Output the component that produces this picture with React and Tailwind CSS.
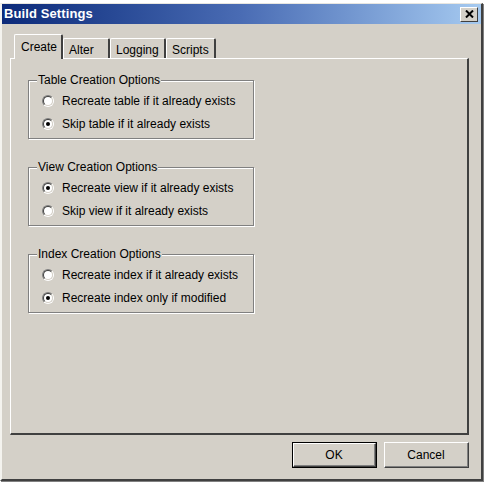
const TABS = [
  { label: 'Create', w: 'w-[49px]', active: true },
  { label: 'Alter', w: 'w-[47px]' },
  { label: 'Logging', w: 'w-[56px]' },
  { label: 'Scripts', w: 'w-[50px]' },
]

const GROUPS = [
  { title: 'Table Creation Options', options: ['Recreate table if it already exists', 'Skip table if it already exists'], picked: 1 },
  { title: 'View Creation Options', options: ['Recreate view if it already exists', 'Skip view if it already exists'], picked: 0 },
  { title: 'Index Creation Options', options: ['Recreate index if it already exists', 'Recreate index only if modified'], picked: 1 },
]

function Radio({ on }) {
  return (
    <div className="w-[12px] h-[12px] rounded-full border border-t-[#808080] border-l-[#808080] border-b-white border-r-white shrink-0">
      <div className="w-full h-full rounded-full border border-t-[#404040] border-l-[#404040] border-b-[#d4d0c8] border-r-[#d4d0c8] bg-white flex items-center justify-center">
        {on && <div className="w-[4px] h-[4px] rounded-full bg-black" />}
      </div>
    </div>
  )
}

function Group({ g }) {
  return (
    <fieldset className="w-[226px] border border-[#808080] shadow-[inset_1px_1px_0_#fff,1px_1px_0_#fff] pl-[13px] pt-[2px] pb-[3px]">
      <legend className="ml-[-5px] px-[1px] bg-[#d4d0c8] leading-[14px] relative">{g.title}</legend>
      {g.options.map((o, i) => (
        <div key={o} className="h-[23px] flex items-center gap-[8px]">
          <Radio on={i === g.picked} />
          <span>{o}</span>
        </div>
      ))}
    </fieldset>
  )
}

function Btn({ children, def }) {
  return (
    <div className={`w-[85px] h-[26px] bg-[#d4d0c8] flex items-center justify-center ${def ? 'border border-black' : ''}`}>
      <div className="w-full h-full border border-t-white border-l-white border-r-[#404040] border-b-[#404040] flex">
        <div className="flex-1 border-r border-b border-[#808080] flex items-center justify-center">{children}</div>
      </div>
    </div>
  )
}

export default function App() {
  return (
    <div className="w-[485px] h-[484px] bg-white pt-[3px] text-[12px] text-black" style={{ fontFamily: '"Liberation Sans", Arial, sans-serif' }}>
      <div className="w-[483px] h-[478px] bg-[#d4d0c8] border-t border-t-[#e8e6e0] border-l-[2px] border-l-[#f4f3ef] border-r-[2px] border-r-[#404040] border-b-[2px] border-b-[#404040] shadow-[1px_1px_0_#808080] flex flex-col">
        <div className="h-[20px] bg-gradient-to-r from-[#0c2a7a] via-[#4a6cb4] to-[#a6caf0] flex items-center justify-between pl-[2px] pr-[3px]">
          <span className="text-white font-bold text-[13px] tracking-[0.1px]">Build Settings</span>
          <div className="w-[18px] h-[15px] bg-[#d4d0c8] border border-t-white border-l-white border-r-[#404040] border-b-[#404040] flex items-center justify-center">
            <svg width="9" height="8" viewBox="0 0 9 8">
              <path d="M1 0.5 L8 7.5 M8 0.5 L1 7.5" stroke="#000" strokeWidth="2" />
            </svg>
          </div>
        </div>

        <div className="flex flex-col pl-[8px] pr-[12px] mt-[10px]">
          <div className="flex items-end pl-[4px] h-[24px] relative z-10">
            {TABS.map(t => (
              <div
                key={t.label}
                className={`${t.w} ${t.active ? 'h-[25px] -mb-[1px] pl-[6px] pt-[3px]' : 'h-[20px] pl-[5px] pt-[2px]'} bg-[#d4d0c8] border-t border-l border-t-white border-l-white border-r-2 border-r-[#404040] rounded-t-[2px]`}
              >
                {t.label}
              </div>
            ))}
          </div>
          <div className="h-[377px] border-t border-l border-white border-r-2 border-b-2 border-r-[#404040] border-b-[#404040] flex flex-col gap-[21px] pl-[17px] pt-[14px]">
            {GROUPS.map(g => <Group key={g.title} g={g} />)}
          </div>
          <div className="flex justify-end gap-[7px] mt-[7px]">
            <Btn def>OK</Btn>
            <Btn>Cancel</Btn>
          </div>
        </div>
      </div>
    </div>
  )
}
